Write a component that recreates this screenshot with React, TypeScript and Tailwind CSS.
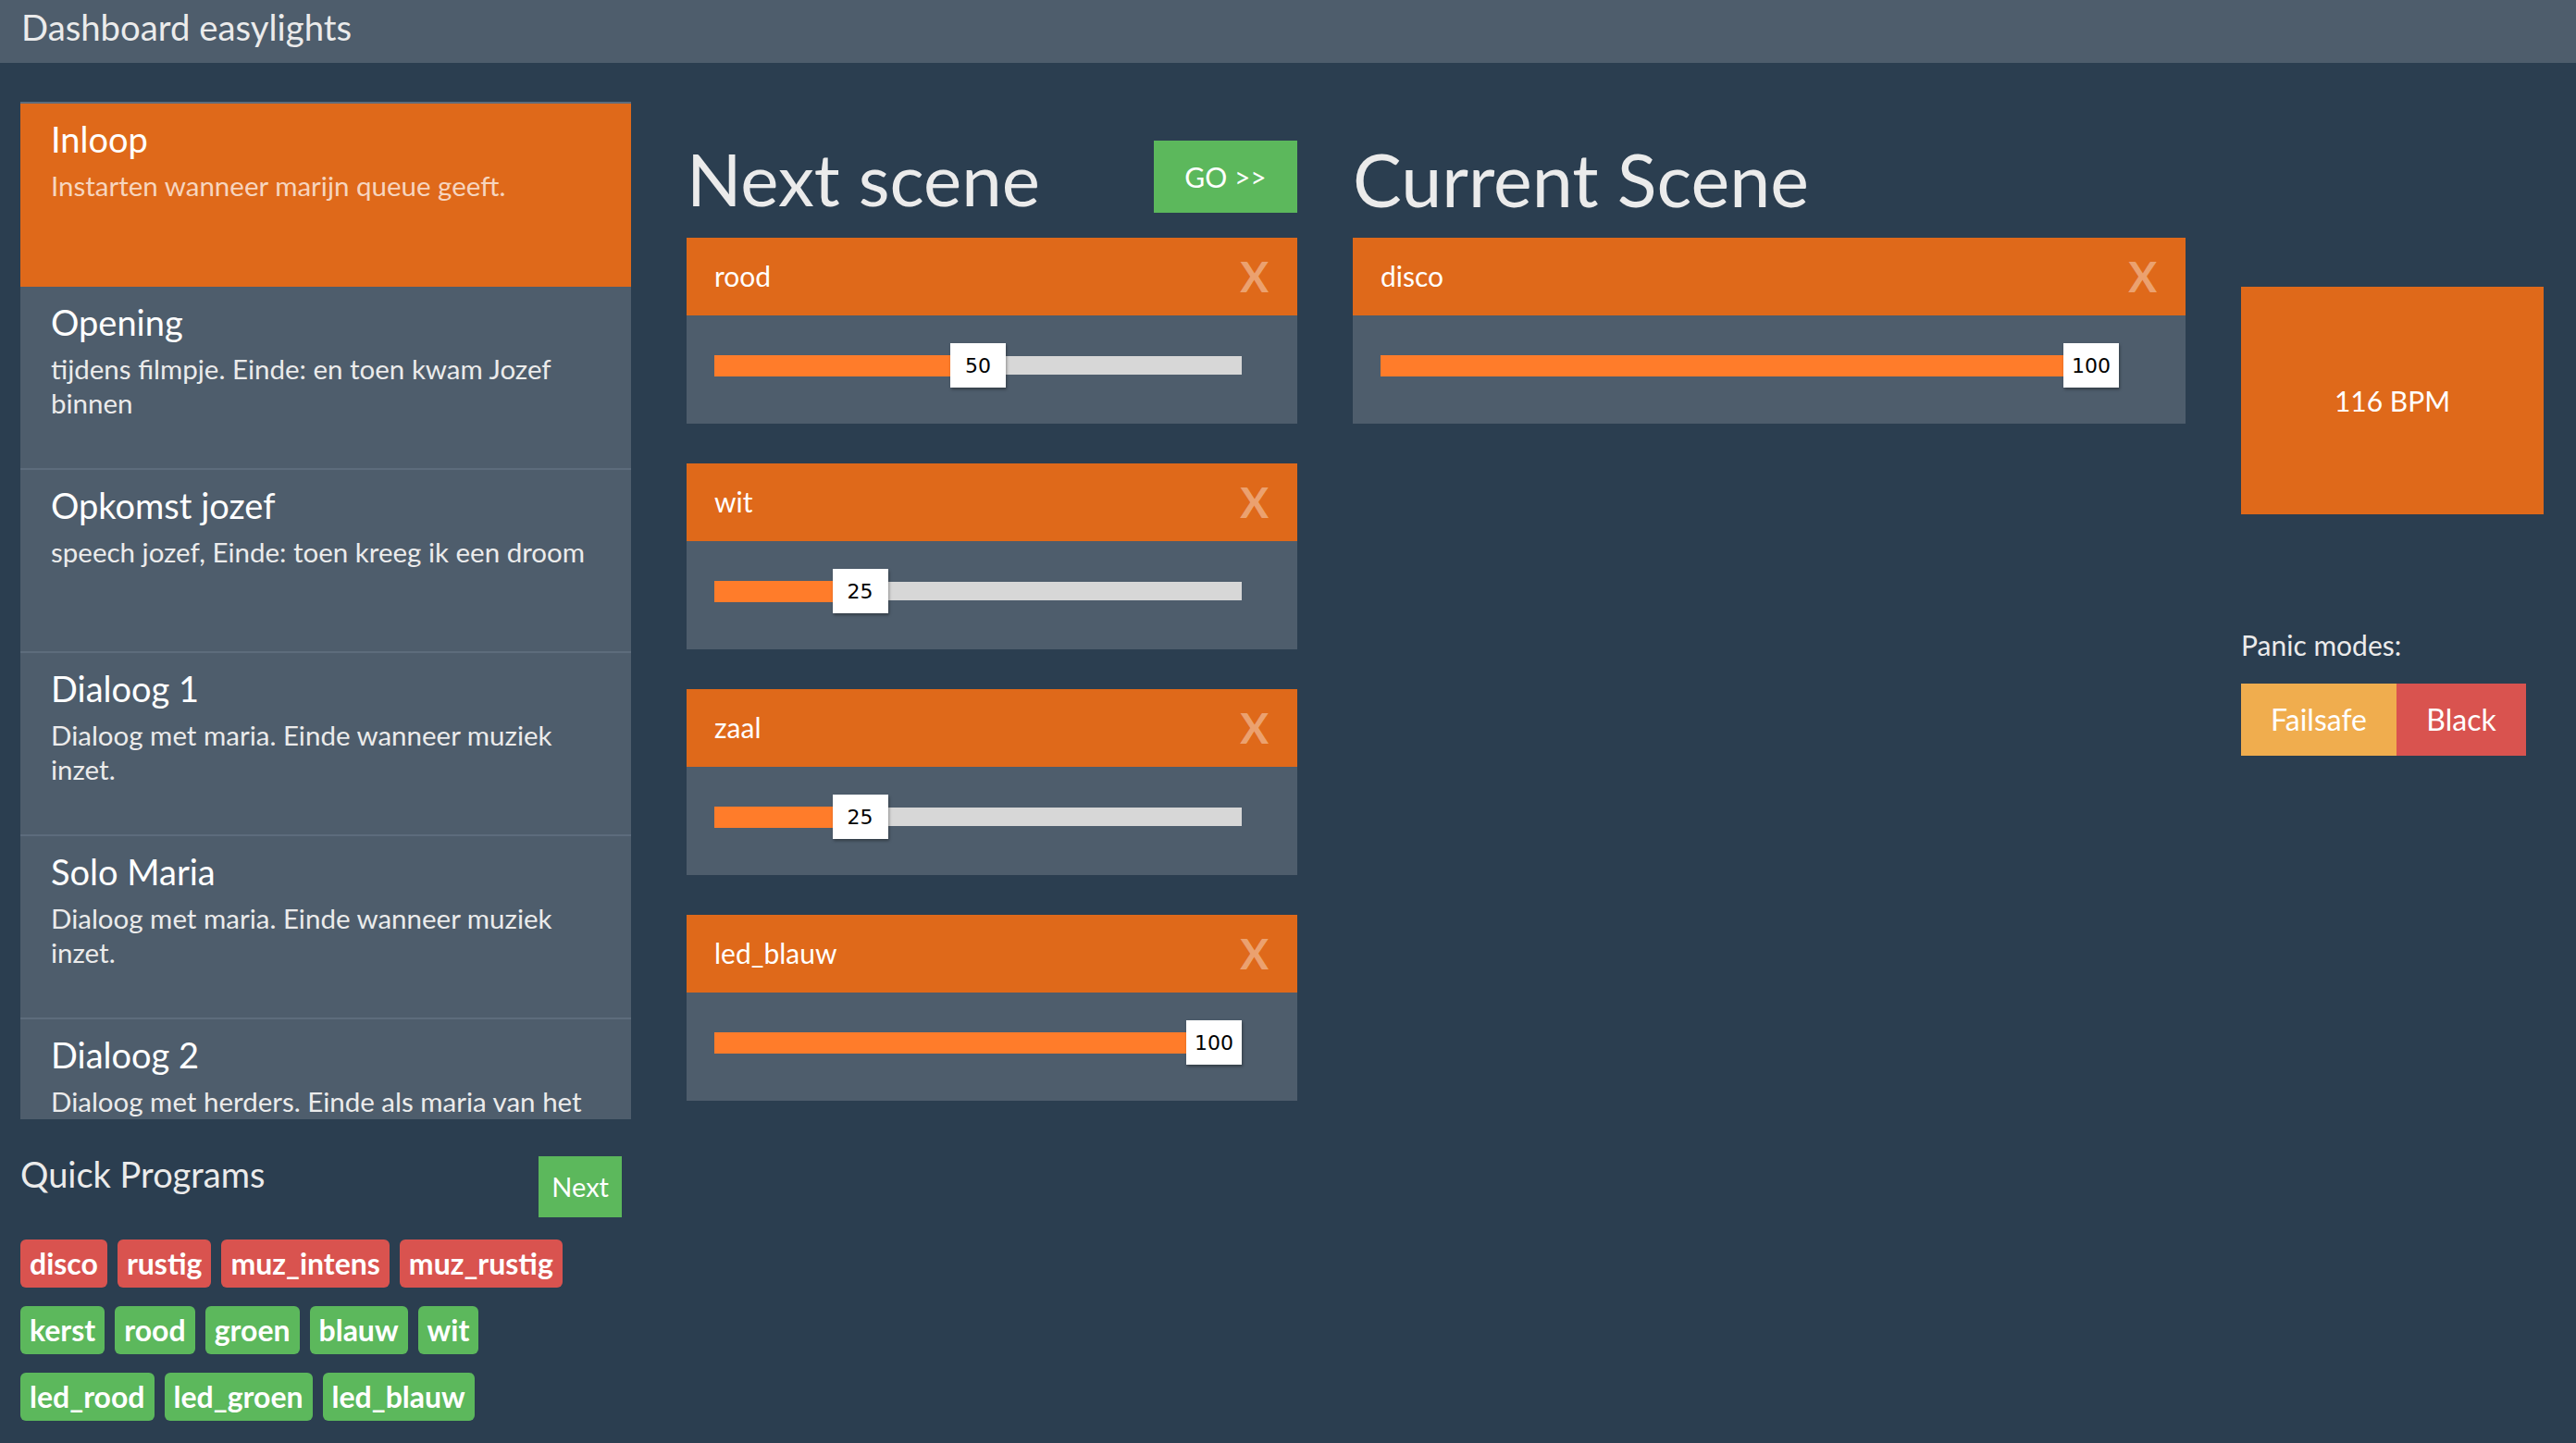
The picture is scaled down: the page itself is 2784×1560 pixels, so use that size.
import React from "react";

type Scene = { title: string; desc: string; active?: boolean };

const scenes: Scene[] = [
  { title: "Inloop", desc: "Instarten wanneer marijn queue geeft.", active: true },
  { title: "Opening", desc: "tijdens filmpje. Einde: en toen kwam Jozef binnen" },
  { title: "Opkomst jozef", desc: "speech jozef, Einde: toen kreeg ik een droom" },
  { title: "Dialoog 1", desc: "Dialoog met maria. Einde wanneer muziek inzet." },
  { title: "Solo Maria", desc: "Dialoog met maria. Einde wanneer muziek inzet." },
  { title: "Dialoog 2", desc: "Dialoog met herders. Einde als maria van het" },
];

const quickRows: { name: string; color: "red" | "green" }[][] = [
  [
    { name: "disco", color: "red" },
    { name: "rustig", color: "red" },
    { name: "muz_intens", color: "red" },
    { name: "muz_rustig", color: "red" },
  ],
  [
    { name: "kerst", color: "green" },
    { name: "rood", color: "green" },
    { name: "groen", color: "green" },
    { name: "blauw", color: "green" },
    { name: "wit", color: "green" },
  ],
  [
    { name: "led_rood", color: "green" },
    { name: "led_groen", color: "green" },
    { name: "led_blauw", color: "green" },
  ],
];

const nextScene = [
  { name: "rood", value: 50 },
  { name: "wit", value: 25 },
  { name: "zaal", value: 25 },
  { name: "led_blauw", value: 100 },
];

function Slider({ value }: { value: number }) {
  return (
    <div className="relative w-[95%] h-[48px] flex items-center">
      <div className="w-full h-[20px] bg-[#d7d7d7]" />
      <div
        className="absolute left-0 top-[12.5px] h-[23px] bg-[#ff7c2a]"
        style={{ width: `calc((100% - 60px) * ${value / 100} + 30px)` }}
      />
      <div
        className="absolute top-0 w-[60px] h-[48px] bg-white flex items-center justify-center text-[22px] text-black font-['DejaVu_Sans',sans-serif] shadow-[1px_2px_3px_rgba(0,0,0,0.35)]"
        style={{ left: `calc((100% - 60px) * ${value / 100})` }}
      >
        {value}
      </div>
    </div>
  );
}

function ChannelCard({ name, value }: { name: string; value: number }) {
  return (
    <div className="mb-[43px]">
      <div className="h-[84px] bg-[#df691a] pl-[30px] pr-[31px] flex items-center justify-between">
        <span className="text-[30px] text-white pb-[2px]">{name}</span>
        <span className="text-[46px] font-bold text-white/40 leading-none">X</span>
      </div>
      <div className="h-[117px] bg-[#4e5d6c] px-[30px] pt-[30px]">
        <Slider value={value} />
      </div>
    </div>
  );
}

export default function App() {
  return (
    <div className="min-h-[1560px] bg-[#2b3e50] text-[#ebebeb] font-['Lato',sans-serif]">
      <div className="h-[68px] bg-[#4e5d6c] px-[23px] pt-[7px]">
        <span className="text-[38.3px] leading-[44px]">Dashboard easylights</span>
      </div>

      <div className="flex items-start gap-[60px] pl-[22px] pt-[42px]">
        {/* scene list + quick programs */}
        <div className="w-[660px]">
          <div className="h-[1100px] overflow-hidden border-t-2 border-[#5d6c7c]">
            {scenes.map((s) => (
              <div
                key={s.title}
                className={
                  s.active
                    ? "h-[198px] border-b-2 border-[#df691a] bg-[#df691a] px-[33px] pt-[18px]"
                    : "h-[198px] border-b-2 border-[#5d6c7c] bg-[#4e5d6c] px-[33px] pt-[18px]"
                }
              >
                <div className="text-[38px] leading-[1.1] mb-[10px] text-white">{s.title}</div>
                <div
                  className={
                    s.active
                      ? "text-[29.5px] leading-[37px] text-[#f6d5bf]"
                      : "text-[29.5px] leading-[37px] text-[#ebebeb]"
                  }
                >
                  {s.desc}
                </div>
              </div>
            ))}
          </div>

          <div className="mt-[40px] flex items-start justify-between">
            <h4 className="text-[38px] leading-[1.1] -mt-[1px]">Quick Programs</h4>
            <button className="h-[66px] px-[14px] mr-[10px] bg-[#5cb85c] text-white text-[29px]">Next</button>
          </div>

          <div className="mt-[24px] flex flex-col gap-[20px]">
            {quickRows.map((row, i) => (
              <div key={i} className="flex gap-[11px]">
                {row.map((q) => (
                  <span
                    key={q.name}
                    className={
                      q.color === "red"
                        ? "h-[52px] px-[10px] rounded-[6px] bg-[#d9534f] text-white font-bold text-[32px] flex items-center"
                        : "h-[52px] px-[10px] rounded-[6px] bg-[#5cb85c] text-white font-bold text-[32px] flex items-center"
                    }
                  >
                    {q.name}
                  </span>
                ))}
              </div>
            ))}
          </div>
        </div>

        {/* next scene */}
        <div className="w-[660px] pt-[40px]">
          <div className="flex items-start justify-between mb-[20px]">
            <h1 className="text-[78px] leading-[87px]">Next scene</h1>
            <button className="mt-[2px] w-[155px] h-[78px] bg-[#5cb85c] text-white text-[30px]">GO &gt;&gt;</button>
          </div>
          {nextScene.map((c) => (
            <ChannelCard key={c.name} name={c.name} value={c.value} />
          ))}
        </div>

        {/* current scene */}
        <div className="w-[900px] pt-[40px]">
          <h1 className="text-[79px] leading-[87px] mb-[20px]">Current Scene</h1>
          <ChannelCard name="disco" value={100} />
        </div>

        {/* bpm + panic */}
        <div className="w-[327px] pt-[200px]">
          <div className="h-[246px] bg-[#df691a] flex items-center justify-center text-white text-[30px]">116 BPM</div>
          <div className="mt-[120px] text-[30px] leading-[42px]">Panic modes:</div>
          <div className="mt-[21px] flex">
            <button className="w-[168px] h-[78px] bg-[#f0ad4e] text-white text-[32px]">Failsafe</button>
            <button className="w-[140px] h-[78px] bg-[#d9534f] text-white text-[32px]">Black</button>
          </div>
        </div>
      </div>
    </div>
  );
}
